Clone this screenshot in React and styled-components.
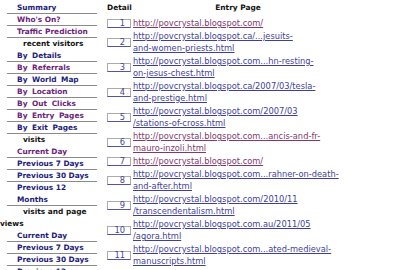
import React from 'react';
import styled, { createGlobalStyle } from 'styled-components';

const Global = createGlobalStyle`
  html, body { margin: 0; padding: 0; background: #fff; }
  body { font-family: "DejaVu Sans", Verdana, sans-serif; overflow: hidden; }
`;

const Page = styled.div`
  display: flex;
  align-items: flex-start;
  gap: 10px;
  width: 400px;
  height: 270px;
  overflow: hidden;
`;

const Sidebar = styled.nav`
  width: 97px;
  flex: none;
  padding-top: 2px;
  display: flex;
  flex-direction: column;
`;

const NavItem = styled.div`
  font-size: 7.4px;
  font-weight: bold;
  line-height: 12px;
  color: ${(p) => (p.$visited ? '#6a2379' : '#1c1c7a')};
  word-spacing: ${(p) => (p.$wide ? '2px' : '0')};
  margin-left: 7px;
  padding-left: 10px;
  box-shadow: inset 0 -1px 0 #8a8a8a;
`;

const NavHeading = styled.div`
  font-size: 7.4px;
  font-weight: bold;
  line-height: 12px;
  color: #111;
  text-indent: 23px;
`;

const Main = styled.div`
  display: flex;
  flex-direction: column;
  gap: 1px;
  padding-top: 2px;
`;

const HeaderRow = styled.div`
  display: grid;
  grid-template-columns: 24px 210px;
  column-gap: 2px;
  height: 14px;
  font-size: 7.4px;
  font-weight: bold;
  line-height: 11px;
  color: #111;
`;

const HeaderCell = styled.div`
  text-align: center;
`;

const Row = styled.div`
  display: grid;
  grid-template-columns: 24px 210px;
  column-gap: 2px;
  align-items: center;
`;

const DetailBox = styled.div`
  box-sizing: border-box;
  height: 9px;
  border: 1px solid #ababab;
  border-bottom-color: #5252a8;
  font-size: 8.3px;
  line-height: 7px;
  text-align: right;
  padding-right: 5px;
  color: #44449c;
`;

const EntryLink = styled.div`
  font-size: 8.3px;
  line-height: 12px;
  white-space: nowrap;
  text-decoration: underline;
  color: ${(p) => (p.$visited ? '#7e3a6e' : '#3f3f9a')};
`;

const nav = [
  { t: 'Summary' },
  { t: "Who's On?", v: true },
  { t: 'Traffic Prediction', v: true },
  { t: 'recent visitors', h: true },
  { t: 'By Details', w: true },
  { t: 'By Referrals', v: true, w: true },
  { t: 'By World Map', w: true },
  { t: 'By Location', v: true, w: true },
  { t: 'By Out Clicks', v: true, w: true },
  { t: 'By Entry Pages', v: true, w: true },
  { t: 'By Exit Pages', w: true },
  { t: 'visits', h: true },
  { t: 'Current Day', v: true },
  { t: 'Previous 7 Days' },
  { t: 'Previous 30 Days' },
  { t: 'Previous 12 Months' },
  { t: 'visits and page views', h: true },
  { t: 'Current Day' },
  { t: 'Previous 7 Days' },
  { t: 'Previous 30 Days' },
  { t: 'Previous 12 Months' },
];

const rows = [
  { lines: ['http://povcrystal.blogspot.com/'], v: true },
  { lines: ['http://povcrystal.blogspot.ca/...jesuits-', 'and-women-priests.html'] },
  { lines: ['http://povcrystal.blogspot.com...hn-resting-', 'on-jesus-chest.html'] },
  { lines: ['http://povcrystal.blogspot.ca/2007/03/tesla-', 'and-prestige.html'] },
  { lines: ['http://povcrystal.blogspot.com/2007/03', '/stations-of-cross.html'] },
  { lines: ['http://povcrystal.blogspot.com...ancis-and-fr-', 'mauro-inzoli.html'], v: true },
  { lines: ['http://povcrystal.blogspot.com/'], v: true },
  { lines: ['http://povcrystal.blogspot.com...rahner-on-death-', 'and-after.html'] },
  { lines: ['http://povcrystal.blogspot.com/2010/11', '/transcendentalism.html'] },
  { lines: ['http://povcrystal.blogspot.com.au/2011/05', '/agora.html'] },
  { lines: ['http://povcrystal.blogspot.com...ated-medieval-', 'manuscripts.html'] },
  { lines: ['http://povcrystal.blogspot.com/'] },
];

export default function App() {
  return (
    <>
      <Global />
      <Page>
        <Sidebar>
          {nav.map((n, i) =>
            n.h ? (
              <NavHeading key={i}>{n.t}</NavHeading>
            ) : (
              <NavItem key={i} $visited={n.v} $wide={n.w}>
                {n.t}
              </NavItem>
            )
          )}
        </Sidebar>
        <Main>
          <HeaderRow>
            <HeaderCell>Detail</HeaderCell>
            <HeaderCell>Entry Page</HeaderCell>
          </HeaderRow>
          {rows.map((r, i) => (
            <Row key={i}>
              <DetailBox>{i + 1}</DetailBox>
              <EntryLink $visited={r.v}>
                {r.lines.map((l, j) => (
                  <React.Fragment key={j}>
                    {j > 0 && <br />}
                    {l}
                  </React.Fragment>
                ))}
              </EntryLink>
            </Row>
          ))}
        </Main>
      </Page>
    </>
  );
}
